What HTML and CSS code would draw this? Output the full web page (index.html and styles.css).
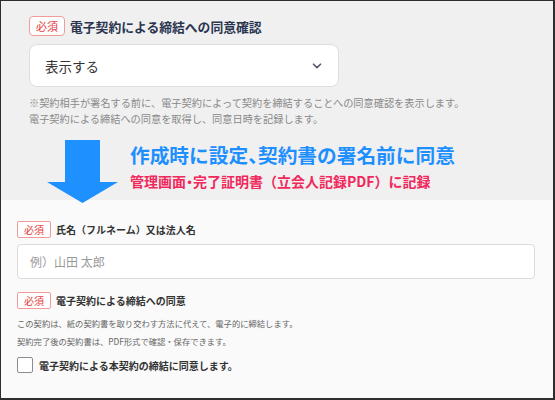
FILE: index.html
```html
<!DOCTYPE html>
<html lang="ja">
<head>
<meta charset="utf-8">
<link rel="stylesheet" href="styles.css">
</head>
<body>
<div class="frame">
  <section class="top">
    <div class="title-row">
      <span class="badge badge-lg">必須</span>
      <span class="title">電子契約による締結への同意確認</span>
    </div>
    <div class="select">
      <span>表示する</span>
      <svg class="chev" width="10" height="6" viewBox="0 0 10 6"><path d="M1.5 1.2 L5 4.6 L8.5 1.2" fill="none" stroke="#555a66" stroke-width="1.6" stroke-linecap="round" stroke-linejoin="round"/></svg>
    </div>
    <p class="help">※契約相手が署名する前に、電子契約によって契約を締結することへの同意確認を表示します。<br>電子契約による締結への同意を取得し、同意日時を記録します。</p>
    <div class="arrow-row">
      <svg class="arrow" width="71" height="63" viewBox="0 0 71 63"><polygon points="18,0 53,0 53,42 71,42 35.5,63 0,42 18,42" fill="#1e90ff"/></svg>
      <div class="callout">
        <div class="blue">作成時に設定<span class="half">、</span>契約書の署名前に同意</div>
        <div class="red">管理画面<span class="half">・</span>完了証明書（立会人記録PDF）に記録</div>
      </div>
    </div>
  </section>
  <section class="bottom">
    <div class="field-row first">
      <span class="badge badge-sm">必須</span>
      <span class="label">氏名（フルネーム）又は法人名</span>
    </div>
    <div class="input">例）山田 太郎</div>
    <div class="field-row second">
      <span class="badge badge-sm">必須</span>
      <span class="label">電子契約による締結への同意</span>
    </div>
    <p class="desc">この契約は、紙の契約書を取り交わす方法に代えて、電子的に締結します。<br>契約完了後の契約書は、PDF形式で確認・保存できます。</p>
    <div class="check-row">
      <span class="checkbox"></span>
      <span class="label">電子契約による本契約の締結に同意します。</span>
    </div>
  </section>
</div>
</body>
</html>
```
FILE: styles.css
```css
* { box-sizing: border-box; }
html, body { margin: 0; padding: 0; }
body {
  font-family: "Noto Sans CJK JP", "Noto Sans", sans-serif;
  background: #fff;
}
.frame {
  width: 555px;
  height: 400px;
  border: 1px solid #2e2e2e;
  border-right-width: 2px;
  border-bottom-width: 2px;
  overflow: hidden;
  display: flex;
  flex-direction: column;
}
.top {
  height: 199px;
  background: #f0f0f0;
  padding: 15px 0 0 28px;
  flex: none;
}
.title-row {
  display: flex;
  align-items: center;
  gap: 5px;
  height: 20px;
}
.badge {
  display: inline-flex;
  align-items: center;
  justify-content: center;
  background: #fff;
  color: #e53c3c;
  border: 1px solid #f39a9a;
  line-height: 1;
}
.badge-lg {
  height: 20px;
  padding: 0 6px;
  font-size: 11px;
  border-radius: 4px;
  border-width: 1.5px;
}
.title {
  font-size: 12.8px;
  font-weight: 700;
  color: #2a3550;
}
.select {
  margin-top: 8px;
  width: 310px;
  height: 43px;
  background: #fff;
  border: 1px solid #dedede;
  border-radius: 8px;
  display: flex;
  align-items: center;
  justify-content: space-between;
  padding: 0 16px 0 15px;
  font-size: 13.5px;
  color: #333;
}
.chev { margin-top: 1px; }
.help {
  margin: 8px 0 0;
  font-size: 10.2px;
  line-height: 16px;
  color: #8a8a8a;
}
.arrow-row {
  margin-top: 13px;
  padding-left: 18px;
  display: flex;
  align-items: flex-start;
  position: relative;
  z-index: 1;
}
.arrow { display: block; flex: none; }
.callout {
  margin-left: 12px;
  padding-top: 3px;
  font-weight: 700;
}
.half { font-feature-settings: "halt"; }
.blue {
  font-size: 19.7px;
  line-height: 24px;
  color: #1e8fff;
}
.red {
  margin-top: 4px;
  font-size: 14px;
  line-height: 20px;
  color: #f0285c;
}
.bottom {
  flex: 1;
  background: #fafafa;
  padding: 21px 0 0 16px;
}
.field-row {
  display: flex;
  align-items: center;
  gap: 5px;
  height: 17px;
}
.badge-sm {
  height: 17px;
  padding: 0 6px;
  font-size: 10px;
  border-radius: 2px;
}
.label {
  font-size: 10px;
  font-weight: 700;
  color: #333;
}
.input {
  margin-top: 6px;
  width: 518px;
  height: 35px;
  background: #fff;
  border: 1px solid #dcdcdc;
  border-radius: 4px;
  padding-left: 12px;
  display: flex;
  align-items: center;
  font-size: 12px;
  color: #9a9a9a;
}
.second { margin-top: 13px; }
.desc {
  margin: 5px 0 0;
  font-size: 8.3px;
  line-height: 18px;
  color: #666;
}
.check-row {
  margin-top: 7px;
  display: flex;
  align-items: center;
  gap: 6px;
}
.checkbox {
  width: 16px;
  height: 16px;
  background: #fff;
  border: 1px solid #8c8c8c;
  border-radius: 2px;
}
```
